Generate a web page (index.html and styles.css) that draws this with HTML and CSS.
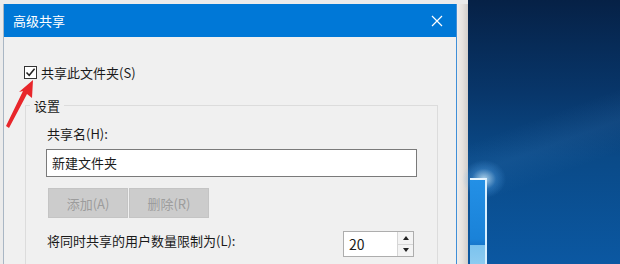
FILE: index.html
```html
<!DOCTYPE html>
<html lang="zh-CN">
<head>
  <meta charset="UTF-8" />
  <title>高级共享</title>
  <link rel="stylesheet" href="styles.css">
</head>
<body>
  <div class="screen">
    <div class="backdrop">
      <div class="dialog">
        <div class="titlebar">
          <span class="title">高级共享</span>
          <svg class="close" width="12" height="12" viewBox="0 0 12 12">
            <path d="M1 1 L11 11 M11 1 L1 11" stroke="#fff" stroke-width="1.2" fill="none" />
          </svg>
        </div>
        <div class="dialog-body">
          <label class="check-row">
            <span class="checkbox">
              <svg width="11" height="11" viewBox="0 0 11 11">
                <path d="M1.5 5.5 L4.2 8.3 L9.6 1.8" stroke="#222" stroke-width="1.5" fill="none" />
              </svg>
            </span>
            共享此文件夹(S)
          </label>
          <fieldset class="group">
            <legend>设置</legend>
            <div class="field-label">共享名(H):</div>
            <div class="text-input">新建文件夹</div>
            <div class="btn-row">
              <button disabled>添加(A)</button>
              <button disabled>删除(R)</button>
            </div>
            <div class="limit-row">
              <span>将同时共享的用户数量限制为(L):</span>
              <div class="spin">
                <span class="spin-value">20</span>
                <span class="spin-btns">
                  <span class="spin-up"></span>
                  <span class="spin-down"></span>
                </span>
              </div>
            </div>
          </fieldset>
        </div>
      </div>
      <div class="edge-strip"></div>
    </div>
    <div class="desktop">
      <div class="glow"></div>
      <div class="pane"></div>
    </div>
    <!-- annotation arrow drawn over the screenshot -->
    <svg class="arrow" width="40" height="140" viewBox="0 0 40 140">
      <polygon points="33,80 32,98 27,94 9,128 6,126 23,91 19,92" fill="#e8262b" />
    </svg>
  </div>
</body>
</html>
```

FILE: styles.css
```css
* { box-sizing: border-box; }
body, html {
  margin: 0;
  padding: 0;
  overflow: hidden;
  font-family: "Noto Sans CJK SC", "Noto Sans", sans-serif;
  font-size: 13px;
  color: #1a1a1a;
}
.screen {
  position: relative;
  display: flex;
  width: 620px;
  height: 264px;
  overflow: hidden;
}
.backdrop {
  display: flex;
  width: 468px;
  height: 264px;
  background: #ebebeb;
  padding: 4px 0 0 3px;
}
.dialog {
  width: 454px;
  height: 300px;
  border-left: 1px solid #a9b6c4;
  border-right: 1px solid #3f8fd8;
  background: #f0f0f0;
}
.titlebar {
  display: flex;
  align-items: center;
  justify-content: space-between;
  height: 33px;
  background: #0078d7;
  color: #fff;
  padding: 0 13px 0 9px;
  line-height: 17px;
}
.close { display: block; }
.dialog-body {
  padding: 29px 0 0 20px;
}
.check-row {
  display: flex;
  align-items: center;
  gap: 4px;
  height: 13px;
  line-height: 17px;
}
.checkbox {
  display: flex;
  align-items: center;
  justify-content: center;
  width: 13px;
  height: 13px;
  border: 1px solid #333;
  background: #fff;
}
.group {
  width: 413px;
  margin: 18px 0 0 1px;
  padding: 13px 0 20px 21px;
  border: 1px solid #dcdcdc;
  border-radius: 0;
}
.group legend {
  padding: 0 4px;
  margin-left: -17px;
  line-height: 17px;
}
.field-label {
  line-height: 17px;
  margin-top: -2px;
}
.text-input {
  width: 371px;
  height: 28px;
  margin: 7px 0 0 -1px;
  border: 1px solid #7a7a7a;
  background: #fff;
  padding-left: 5px;
  line-height: 26px;
}
.btn-row {
  display: flex;
  gap: 1px;
  margin: 11px 0 0 1px;
}
.btn-row button {
  width: 80px;
  height: 30px;
  border: 1px solid #c4c4c4;
  background: #cccccc;
  color: #9c9c9c;
  font-family: inherit;
  font-size: 13px;
  padding: 0;
}
.limit-row {
  display: flex;
  justify-content: space-between;
  margin-top: 13px;
  padding-right: 23px;
}
.limit-row > span {
  line-height: 17px;
  margin-top: 1px;
}
.spin {
  display: flex;
  width: 71px;
  height: 26px;
  border: 1px solid #adadad;
  background: #fff;
}
.spin-value {
  flex: 1;
  padding-left: 5px;
  line-height: 24px;
  font-size: 14px;
}
.spin-btns {
  display: flex;
  flex-direction: column;
  width: 16px;
  border-left: 1px solid #d6d6d6;
  background: #f4f4f4;
}
.spin-up, .spin-down {
  flex: 1;
  display: flex;
  align-items: center;
  justify-content: center;
}
.spin-up { border-bottom: 1px solid #d6d6d6; }
.spin-up::after {
  content: "";
  border: 3px solid transparent;
  border-bottom: 4px solid #222;
  border-top: 0;
}
.spin-down::after {
  content: "";
  border: 3px solid transparent;
  border-top: 4px solid #222;
  border-bottom: 0;
}
.edge-strip {
  width: 11px;
  height: 100%;
  background: linear-gradient(to right, #f0eeec, #e6e2df 50%, #d2cecb);
}
.desktop {
  position: relative;
  flex: 1;
  height: 264px;
  background:
    linear-gradient(160deg, rgba(255,255,255,0) 45%, rgba(120,180,240,0.08) 55%, rgba(255,255,255,0) 65%),
    linear-gradient(to bottom, #062146 0%, #08366a 35%, #0a4a88 60%, #0b58a2 100%);
}
.glow {
  position: absolute;
  left: -6px;
  top: 160px;
  width: 44px;
  height: 38px;
  background: radial-gradient(closest-side, rgba(210,240,255,0.8), rgba(90,170,240,0.3) 55%, rgba(0,0,0,0));
}
.pane {
  position: absolute;
  left: 2px;
  top: 178px;
  width: 17px;
  height: 86px;
  border-top: 2px solid #e8f6ff;
  border-right: 2px solid #d8f0ff;
  background: linear-gradient(to bottom, #2390e6 0%, #1a82d8 70%, #1878cc 77%, #7cc3ee 78%, #8ccbf0 100%);
}
.arrow {
  position: absolute;
  left: 0;
  top: 0;
}
```
